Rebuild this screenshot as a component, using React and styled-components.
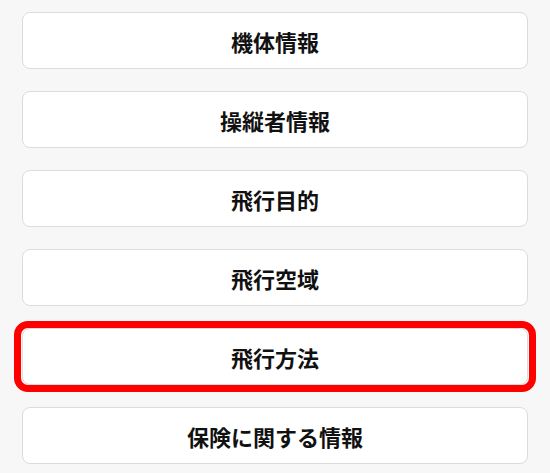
import React from "react";
import styled, { createGlobalStyle } from "styled-components";

const Global = createGlobalStyle`
  html, body { margin: 0; padding: 0; background: #f7f7f7; }
  body { font-family: "Noto Sans CJK JP", "Noto Sans", sans-serif; }
`;

const List = styled.div`
  display: flex;
  flex-direction: column;
  gap: 22px;
  padding: 12px 22px 10px 22px;
  box-sizing: border-box;
  width: 550px;
`;

const Item = styled.button`
  position: relative;
  display: flex;
  align-items: center;
  justify-content: center;
  height: 57px;
  box-sizing: border-box;
  background: #ffffff;
  border: 1px solid #dcdcdc;
  border-radius: 8px;
  font-family: "Noto Sans CJK JP", "Noto Sans", sans-serif;
  font-weight: 700;
  font-size: 22px;
  color: #111111;
  padding: 0;
  cursor: pointer;

  ${(p) =>
    p.$highlight &&
    `
    &::after {
      content: "";
      position: absolute;
      left: -9px;
      right: -9px;
      top: -8px;
      bottom: -8px;
      border: 7px solid #fe0000;
      border-radius: 14px;
      pointer-events: none;
    }
  `}
`;

const items = [
  "機体情報",
  "操縦者情報",
  "飛行目的",
  "飛行空域",
  "飛行方法",
  "保険に関する情報",
];

export default function App() {
  return (
    <>
      <Global />
      <List>
        {items.map((t) => (
          <Item key={t} $highlight={t === "飛行方法"}>
            {t}
          </Item>
        ))}
      </List>
    </>
  );
}
